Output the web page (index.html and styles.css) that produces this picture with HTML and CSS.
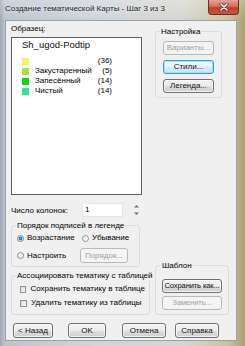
FILE: index.html
```html
<!DOCTYPE html>
<html lang="ru">
<head>
  <meta charset="UTF-8">
  <title>Создание тематической Карты</title>
  <link rel="stylesheet" href="styles.css">
</head>
<body>

  <div class="window">

    <div class="titlebar">
      <span class="title">Создание тематической Карты - Шаг 3 из 3</span>
      <span class="close">
        <svg width="10" height="8" viewBox="0 0 10 8">
          <path d="M2 1 L8 7 M8 1 L2 7" stroke="#5a2015" stroke-width="3" stroke-linecap="round"/>
          <path d="M2 1 L8 7 M8 1 L2 7" stroke="#fff" stroke-width="1.6" stroke-linecap="round"/>
        </svg>
      </span>
    </div>

    <div class="client">

      <div class="top">
        <div class="sample">
          <div class="label">Образец:</div>
          <div class="preview">
            <div class="preview-title">Sh_ugod-Podtip</div>
            <div class="legend-list">
              <div class="legend-row"><span class="swatch c1"></span><span class="name"></span><span class="count">(36)</span></div>
              <div class="legend-row"><span class="swatch c2"></span><span class="name">Закустаренный</span><span class="count">(5)</span></div>
              <div class="legend-row"><span class="swatch c3"></span><span class="name">Запесённый</span><span class="count">(14)</span></div>
              <div class="legend-row"><span class="swatch c4"></span><span class="name">Чистый</span><span class="count">(14)</span></div>
            </div>
          </div>
        </div>

        <fieldset class="group settings">
          <legend>Настройка</legend>
          <button class="btn" disabled>Варианты...</button>
          <button class="btn focus">Стили...</button>
          <button class="btn">Легенда...</button>
        </fieldset>
      </div>

      <div class="cols">
        <span class="cols-label">Число колонок:</span>
        <div class="num-input">1</div>
        <div class="spinner">
          <svg width="5" height="12" viewBox="0 0 5 12">
            <path d="M0 3.5 L2.5 1 L5 3.5 Z" fill="#6f6f6f"/>
            <path d="M0 8.5 L2.5 11 L5 8.5 Z" fill="#6f6f6f"/>
          </svg>
        </div>
      </div>

      <div class="bottom">
        <div class="left-groups">
          <fieldset class="group order">
            <legend>Порядок подписей в легенде</legend>
            <div class="opt-row first">
              <label class="opt asc"><span class="radio checked"></span>Возрастание</label>
              <label class="opt"><span class="radio"></span>Убывание</label>
            </div>
            <div class="opt-row second">
              <label class="opt custom"><span class="radio"></span>Настроить</label>
              <button class="btn order-btn" disabled>Порядок...</button>
            </div>
          </fieldset>

          <fieldset class="group assoc">
            <legend>Ассоциировать тематику с таблицей</legend>
            <label class="check first"><span class="box"></span>Сохранить тематику в таблице</label>
            <label class="check"><span class="box"></span>Удалить тематику из таблицы</label>
          </fieldset>
        </div>

        <fieldset class="group template">
          <legend>Шаблон</legend>
          <button class="btn">Сохранить как...</button>
          <button class="btn second" disabled>Заменить...</button>
        </fieldset>
      </div>

      <div class="footer">
        <button class="btn back">&lt; Назад</button>
        <button class="btn ok">OK</button>
        <button class="btn cancel">Отмена</button>
        <button class="btn help">Справка</button>
      </div>

    </div>
  </div>

</body>
</html>
```

FILE: styles.css
```css
body {
  margin: 0;
  padding: 0;
  font-family: 'Liberation Sans', Arial, sans-serif;
  font-size: 8px;
  color: #000;
}

.window {
  width: 245px;
  height: 346px;
  display: flex;
  flex-direction: column;
  background:
    linear-gradient(180deg, rgba(255,255,255,0.25) 0, rgba(255,255,255,0) 20px),
    linear-gradient(90deg, #9fa9b4 0, #bcc5ce 2%, #cfd5db 40%, #d6d6d0 75%, #c9c29e 93%, #aaa072 100%);
}

.titlebar {
  height: 20px;
  display: flex;
  align-items: flex-start;
  justify-content: space-between;
}

.title {
  padding: 4px 0 0 5px;
  font-size: 8px;
  line-height: 9px;
  color: #1b1b1b;
  text-shadow: 0 0 3px #fff;
  white-space: nowrap;
}

.close {
  width: 31px;
  height: 15px;
  margin-right: 6px;
  box-sizing: border-box;
  display: flex;
  align-items: center;
  justify-content: center;
  border: 1px solid #6f2c20;
  border-top: none;
  border-radius: 0 0 4px 4px;
  background: linear-gradient(180deg, #e4a497 0, #d5705c 45%, #c2402a 55%, #c9553c 100%);
}

.client {
  flex: 1;
  margin: 0 8px 5px 5px;
  padding: 3px 5px 0 5px;
  background: #f0f0f0;
  border: 1px solid #97a2ad;
}

/* top part */

.top {
  display: flex;
  align-items: flex-start;
}

.sample {
  width: 131px;
}

.label {
  line-height: 9px;
}

.preview {
  margin-top: 4px;
  height: 158px;
  box-sizing: border-box;
  border: 1px solid #5f5f5f;
  background: #fff;
  padding: 1px 0 0 10px;
}

.preview-title {
  font-size: 9.5px;
  line-height: 12px;
  color: #111;
}

.legend-list {
  margin-top: 5px;
  width: 90px;
}

.legend-row {
  display: flex;
  align-items: center;
  height: 10px;
  line-height: 10px;
}

.swatch {
  width: 7px;
  height: 7px;
  margin-right: 6px;
}

.c1 { background: #f4f45e; }
.c2 { background: #a6e23c; }
.c3 { background: #12d418; }
.c4 { background: #2fe690; }

.name {
  flex: 1;
}

.count {
  text-align: right;
}

/* group boxes */

.group {
  margin: 0;
  min-width: 0;
  box-sizing: border-box;
  border: 1px solid #d8dde2;
  border-radius: 3px;
  padding: 0 4px 4px 4px;
}

.group legend {
  padding: 0 1px;
  font-size: 8px;
  line-height: 9px;
  white-space: nowrap;
}

.settings {
  width: 67px;
  margin-left: 13px;
  margin-top: 3px;
}

.settings .btn {
  width: 51px;
  margin: 5px 0 0 3px;
}

/* buttons */

.btn {
  display: block;
  height: 14px;
  padding: 0;
  box-sizing: border-box;
  font-family: 'Liberation Sans', Arial, sans-serif;
  font-size: 8px;
  line-height: 12px;
  color: #111;
  text-align: center;
  white-space: nowrap;
  overflow: hidden;
  border: 1px solid #707070;
  border-radius: 3px;
  background: linear-gradient(180deg, #f3f3f3 0, #ebebeb 50%, #dedede 50%, #d0d0d0 100%);
  box-shadow: inset 0 0 0 1px rgba(255,255,255,0.7);
}

.btn:disabled {
  color: #a0a0a0;
  border-color: #b6babd;
  background: #f4f4f4;
  box-shadow: none;
}

.btn.focus {
  border-color: #3a9bcf;
  box-shadow: inset 0 0 0 1px #9fe2f9;
  background: linear-gradient(180deg, #f2fafe 0, #e6f4fb 50%, #d6ecf7 50%, #c9e4f2 100%);
}

/* columns row */

.cols {
  display: flex;
  align-items: center;
  margin-top: 8px;
  height: 14px;
}

.cols-label {
  width: 71px;
}

.num-input {
  width: 41px;
  height: 14px;
  box-sizing: border-box;
  border: 1px solid #e4e4e4;
  background: #fff;
  padding-left: 2px;
  line-height: 12px;
}

.spinner {
  margin-left: 11px;
  display: flex;
  align-items: center;
}

/* bottom part */

.bottom {
  display: flex;
  align-items: flex-end;
  margin-top: 4px;
}

.left-groups {
  width: 139px;
}

.order {
  width: 129px;
  padding-bottom: 3px;
}

.opt-row {
  display: flex;
  align-items: center;
}

.opt-row.first {
  margin-top: 4px;
  height: 8px;
}

.opt-row.second {
  margin-top: 6px;
  height: 15px;
}

.opt {
  display: flex;
  align-items: center;
  line-height: 8px;
  white-space: nowrap;
}

.opt.asc {
  width: 65px;
  margin-left: 1px;
}

.opt.custom {
  width: 63px;
  margin-left: 1px;
}

.radio {
  width: 7px;
  height: 7px;
  box-sizing: border-box;
  margin-right: 3px;
  border: 1px solid #8e9194;
  border-radius: 50%;
  background: linear-gradient(135deg, #e6e6e6, #fbfbfb);
}

.radio.checked {
  border-color: #7a8a99;
  background: radial-gradient(circle, #4ab0e6 0, #1a6fb0 45%, #dfe7ee 60%, #f5f5f5 100%);
}

.order-btn {
  width: 48px;
  height: 15px;
  line-height: 13px;
}

.assoc {
  margin-top: 4px;
  width: 139px;
  padding-bottom: 7px;
}

.check {
  display: flex;
  align-items: center;
  height: 8px;
  line-height: 8px;
  margin-top: 6px;
  white-space: nowrap;
}

.check.first {
  margin-top: 5px;
}

.box {
  width: 7px;
  height: 7px;
  box-sizing: border-box;
  margin: 0 4px 0 4px;
  border: 1px solid #8e9194;
  background: linear-gradient(135deg, #dcdcdc, #fafafa);
}

.template {
  width: 74px;
  margin-left: 5px;
  padding-left: 5px;
}

.template .btn {
  width: 60px;
  margin: 9px 0 0 1px;
  font-size: 7.5px;
  letter-spacing: -0.1px;
}

.template .btn.second {
  margin-top: 3px;
}

/* footer */

.footer {
  display: flex;
  margin-top: 8px;
}

.footer .btn {
  height: 15px;
  line-height: 13px;
}

.back { width: 40px; margin-left: 2px; }
.ok { width: 38px; margin-left: 15px; }
.cancel { width: 44px; margin-left: 16px; }
.help { width: 44px; margin-left: 9px; }
```
